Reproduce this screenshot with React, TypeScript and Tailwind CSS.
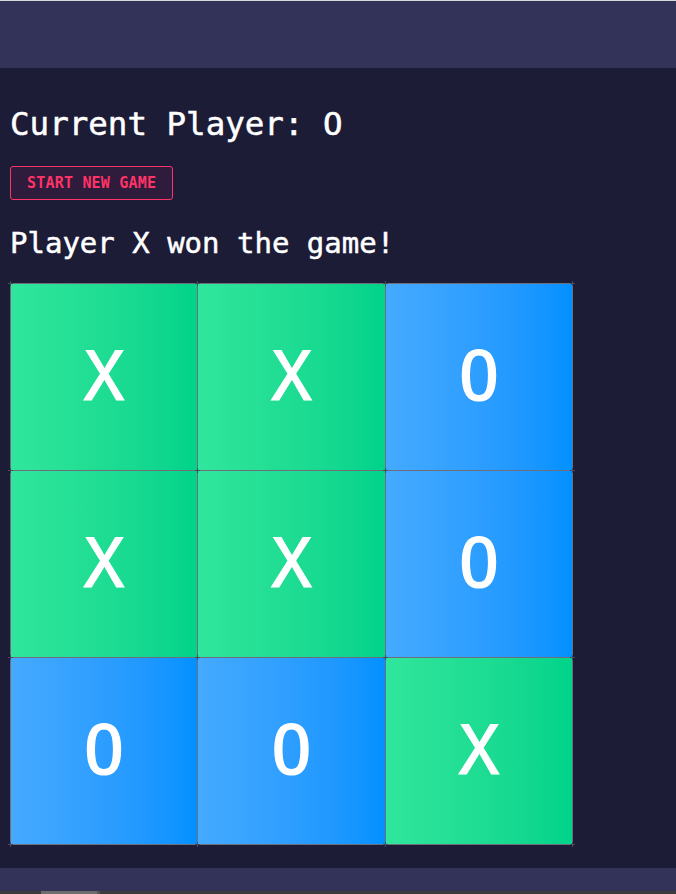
import React from "react";

const board = ["X", "X", "O", "X", "X", "O", "O", "O", "X"];
const xs = [0, 187, 375, 562];
const ys = [0, 187, 374, 561];

export default function App() {
  return (
    <div
      className="w-[676px] h-[894px] bg-[#1c1c37] flex flex-col overflow-hidden"
      style={{ fontFamily: '"DejaVu Sans Mono", monospace' }}
    >
      <div className="h-px bg-[#d8d8dc]" />
      <div className="h-[67px] bg-[#333359]" />
      <main className="flex-1 flex flex-col items-start pl-[10px] pt-[37px]">
        <h1 className="text-[32.5px] leading-[38px] font-normal text-white [-webkit-text-stroke:0.5px_white]">
          Current Player: O
        </h1>
        <button className="mt-[23px] h-[34px] px-[16px] rounded-[3px] border border-[#ff3366] bg-[#2f1b3c] text-[#ff3366] text-[15px] font-bold tracking-[0.2px]">
          START NEW GAME
        </button>
        <h2 className="mt-[26px] text-[29px] leading-[34px] font-normal text-white [-webkit-text-stroke:0.5px_white]">
          Player X won the game!
        </h2>
        <div className="relative mt-[23px]">
          <div className="w-[563px] h-[562px] grid grid-cols-[186px_187px_186px] grid-rows-[186px_186px_186px] gap-px p-px bg-[#6e6e7c]">
            {board.map((v, i) => (
              <div
                key={i}
                className={
                  v === "X"
                    ? "flex items-center justify-center bg-gradient-to-r from-[#2fe69c] to-[#00d38a] text-white text-[68px] [-webkit-text-stroke:1.2px_white]"
                    : "flex items-center justify-center bg-gradient-to-r from-[#45aaff] to-[#0091ff] text-white text-[68px] [-webkit-text-stroke:1.2px_white]"
                }
              >
                {v}
              </div>
            ))}
          </div>
          {ys.map((y) =>
            xs.map((x) => (
              <div
                key={`${x}-${y}`}
                className="absolute w-[5px] h-[5px]"
                style={{ left: x - 2, top: y - 2 }}
              >
                <div className="absolute left-[2px] top-0 w-px h-[5px] bg-[#4a4a5a]" />
                <div className="absolute top-[2px] left-0 h-px w-[5px] bg-[#4a4a5a]" />
              </div>
            ))
          )}
        </div>
      </main>
      <div className="h-[23px] bg-[#333359]" />
      <div className="h-[3px] bg-[#3c3c3c] flex">
        <div className="ml-[41px] w-[56px] bg-[#6e6e6e]" />
        <div className="w-[3px] bg-[#555]" />
      </div>
    </div>
  );
}
